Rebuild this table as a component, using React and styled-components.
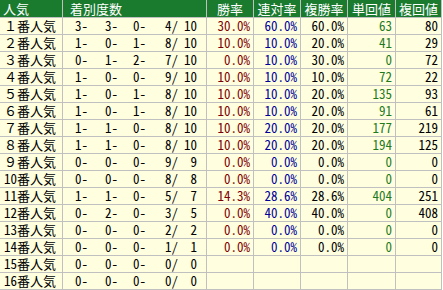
import React from "react";
import styled, { createGlobalStyle } from "styled-components";

const GlobalStyle = createGlobalStyle`
  html, body { margin: 0; padding: 0; background: #ffffff; }
  body { font-family: "Noto Sans CJK JP", sans-serif; }
`;

const GREEN = "#1a7a2e";
const LINE = "#c0c0c0";
const BODY_BG = "#ffffe0";

const tones = {
  win: "#800000",
  place: "#000099",
  ret: "#1f7a1f",
  plain: "#000000",
};

const Table = styled.div`
  display: grid;
  grid-template-columns: 63px 144px 47px 47px 47px 48px 46px;
  grid-template-rows: 18px;
  grid-auto-rows: 17px;
  width: 442px;
  font-size: 13px;
`;

const HeadCell = styled.div`
  box-sizing: border-box;
  border-right: 1px solid ${LINE};
  border-bottom: 1px solid ${LINE};
  background: ${GREEN};
  color: #ffffff;
  line-height: 17px;
  white-space: nowrap;
  font-family: "Noto Sans CJK JP", sans-serif;
  text-align: ${(p) => p.$align || "center"};
  padding-left: ${(p) => p.$pad || 0}px;
`;

const Cell = styled.div`
  box-sizing: border-box;
  border-right: 1px solid ${LINE};
  border-bottom: 1px solid ${LINE};
  background: ${BODY_BG};
  color: ${(p) => tones[p.$tone || "plain"]};
  line-height: 16px;
  white-space: nowrap;
  font-family: "Noto Sans Mono CJK JP", "Noto Sans CJK JP", "DejaVu Sans Mono", monospace;
  text-align: right;
  padding-right: 3px;
`;

const LabelCell = styled(Cell)`
  text-align: left;
  padding-left: 4px;
  padding-right: 0;
`;

const CountCell = styled(Cell)`
  display: flex;
  padding-right: 0;
`;

const Field = styled.span`
  display: block;
  width: ${(p) => p.$w}px;
  text-align: right;
  flex: none;
`;

const rows = [
  ["１番人気", [3, 3, 0, 4, 10], "30.0%", "60.0%", "60.0%", "63", "80"],
  ["２番人気", [1, 0, 1, 8, 10], "10.0%", "10.0%", "20.0%", "41", "29"],
  ["３番人気", [0, 1, 2, 7, 10], "0.0%", "10.0%", "30.0%", "0", "72"],
  ["４番人気", [1, 0, 0, 9, 10], "10.0%", "10.0%", "10.0%", "72", "22"],
  ["５番人気", [1, 0, 1, 8, 10], "10.0%", "10.0%", "20.0%", "135", "93"],
  ["６番人気", [1, 0, 1, 8, 10], "10.0%", "10.0%", "20.0%", "91", "61"],
  ["７番人気", [1, 1, 0, 8, 10], "10.0%", "20.0%", "20.0%", "177", "219"],
  ["８番人気", [1, 1, 0, 8, 10], "10.0%", "20.0%", "20.0%", "194", "125"],
  ["９番人気", [0, 0, 0, 9, 9], "0.0%", "0.0%", "0.0%", "0", "0"],
  ["10番人気", [0, 0, 0, 8, 8], "0.0%", "0.0%", "0.0%", "0", "0"],
  ["11番人気", [1, 1, 0, 5, 7], "14.3%", "28.6%", "28.6%", "404", "251"],
  ["12番人気", [0, 2, 0, 3, 5], "0.0%", "40.0%", "40.0%", "0", "408"],
  ["13番人気", [0, 0, 0, 2, 2], "0.0%", "0.0%", "0.0%", "0", "0"],
  ["14番人気", [0, 0, 0, 1, 1], "0.0%", "0.0%", "0.0%", "0", "0"],
  ["15番人気", [0, 0, 0, 0, 0], "", "", "", "", ""],
  ["16番人気", [0, 0, 0, 0, 0], "", "", "", "", ""],
];

const fieldWidths = [25, 30, 28, 32, 19];

export default function App() {
  return (
    <>
      <GlobalStyle />
      <Table>
        <HeadCell $align="left" $pad={3}>人気</HeadCell>
        <HeadCell $align="left" $pad={7}>着別度数</HeadCell>
        <HeadCell>勝率</HeadCell>
        <HeadCell>連対率</HeadCell>
        <HeadCell>複勝率</HeadCell>
        <HeadCell>単回値</HeadCell>
        <HeadCell>複回値</HeadCell>
        {rows.map(([label, c, win, ren, fuku, tan, fret]) => (
          <React.Fragment key={label}>
            <LabelCell>{label}</LabelCell>
            <CountCell>
              <Field $w={fieldWidths[0]}>{c[0]}-</Field>
              <Field $w={fieldWidths[1]}>{c[1]}-</Field>
              <Field $w={fieldWidths[2]}>{c[2]}-</Field>
              <Field $w={fieldWidths[3]}>{c[3]}/</Field>
              <Field $w={fieldWidths[4]}>{c[4]}</Field>
            </CountCell>
            <Cell $tone="win">{win}</Cell>
            <Cell $tone="place">{ren}</Cell>
            <Cell>{fuku}</Cell>
            <Cell $tone="ret">{tan}</Cell>
            <Cell>{fret}</Cell>
          </React.Fragment>
        ))}
      </Table>
    </>
  );
}
